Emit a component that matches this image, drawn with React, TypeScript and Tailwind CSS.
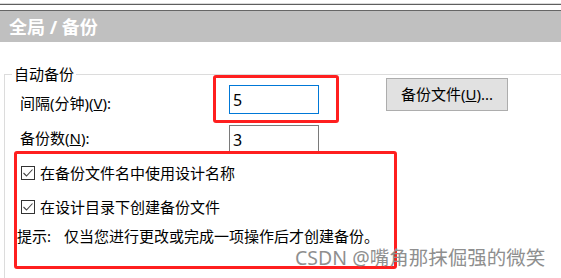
export default function App() {
  const font = "font-['Noto_Sans','Noto_Sans_CJK_SC',sans-serif]";
  return (
    <div className={`relative w-[561px] h-[278px] overflow-hidden bg-white text-black ${font}`}>
      {/* top strip */}
      <div className="h-[3px]" />
      <div className="h-px bg-[#d9d9d9]" />
      <div className="h-px bg-[#5f5f5f]" />
      <div className="h-[5px]" />
      <div className="h-[32px] border-t border-[#666666] bg-[#c0c0c0] flex items-center pl-[9px]">
        <span className="text-[18px] leading-none font-bold text-white">全局 / 备份</span>
      </div>

      {/* group box */}
      <fieldset className="mt-[22px] ml-[4px] w-[600px] h-[300px] border-t border-l border-[#dcdcdc]">
        <legend className="ml-[7px] px-[2px] text-[15px] leading-[20px]">自动备份</legend>
        <div className="pl-[15px]">
          <div className="flex items-start mt-[-6px]">
            <div className="w-[209px] mt-[15px] text-[15px] leading-[20px]">
              间隔(分钟)(<u>V</u>):
            </div>
            <div className="mt-[7px] w-[90px] h-[29px] border border-[#0078d7] pl-[3px] flex items-center text-[16px]">5</div>
            <button className="ml-[67px] w-[122px] h-[33px] bg-[#e1e1e1] border border-[#adadad] text-[15px] leading-none">
              备份文件(<u>U</u>)...
            </button>
          </div>
          <div className="flex items-start">
            <div className="w-[209px] mt-[14px] text-[15px] leading-[20px]">
              备份数(<u>N</u>):
            </div>
            <div className="mt-[11px] w-[90px] h-[29px] border border-[#7a7a7a] pl-[3px] flex items-center text-[16px]">3</div>
          </div>
          <div className="mt-[9px] flex items-center h-[20px] text-[15px]">
            <CheckBox />
            <span className="ml-[5px]">在备份文件名中使用设计名称</span>
          </div>
          <div className="mt-[14px] flex items-center h-[20px] text-[15px]">
            <CheckBox />
            <span className="ml-[5px]">在设计目录下创建备份文件</span>
          </div>
          <div className="mt-[9px] -ml-[3px] flex items-center h-[20px] text-[15px]">
            <span>提示:</span>
            <span className="ml-[13px]">仅当您进行更改或完成一项操作后才创建备份。</span>
          </div>
        </div>
      </fieldset>

      {/* red annotation boxes */}
      <div className="absolute left-[213px] top-[75px] w-[126px] h-[48px] border-[3px] border-[#ff1f1f] rounded-[3px]" />
      <div className="absolute left-[14px] top-[151px] w-[383px] h-[118px] border-[3px] border-[#ff1f1f] rounded-[3px]" />

      {/* watermark */}
      <div className="absolute left-[295px] top-[246px] text-[19.5px] leading-[24px] text-[#8f8f8f] whitespace-nowrap">
        CSDN @嘴角那抹倔强的微笑
      </div>
    </div>
  );
}

function CheckBox() {
  return (
    <span className="ml-[1px] w-[14px] h-[14px] border border-[#333333] bg-white flex items-center justify-center">
      <svg width="12" height="12" viewBox="0 0 12 12">
        <polyline points="1.5,6 4.5,9 10.5,2.5" fill="none" stroke="#444444" strokeWidth="1.1" />
      </svg>
    </span>
  );
}
